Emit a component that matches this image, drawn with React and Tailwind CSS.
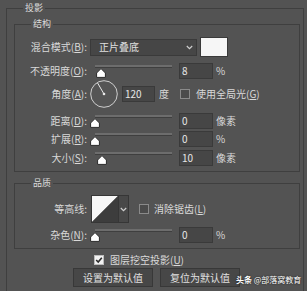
import React from "react";

const K = ({ c }) => <span className="underline underline-offset-[1px] decoration-[1px]">{c}</span>;

function Label({ children }) {
  return <div className="w-[72px] shrink-0 text-right whitespace-nowrap">{children}</div>;
}

function Chevron() {
  return (
    <svg width="7" height="5" viewBox="0 0 7 5" className="shrink-0">
      <polyline points="0.8,1 3.5,3.6 6.2,1" fill="none" stroke="#cfcfcf" strokeWidth="1.2" />
    </svg>
  );
}

function Slider({ thumb }) {
  return (
    <div className="relative w-[87px] h-[16px] shrink-0">
      <div className="absolute left-[5px] right-[5px] top-[2px] h-[3px] bg-[#6d6d6d] border-b border-[#3f3f3f]" />
      <svg className={"absolute top-[5px] " + thumb} width="10" height="10" viewBox="0 0 10 10">
        <path d="M5 0.6 L9.4 5 L9.4 9.4 L0.6 9.4 L0.6 5 Z" fill="#ffffff" stroke="#2a2a2a" strokeWidth="1" />
      </svg>
    </div>
  );
}

function Input({ v, w = "w-[34px]" }) {
  return (
    <div className={"h-[16px] shrink-0 bg-[#464646] border border-[#3a3a3a] pl-[2px] flex items-center leading-none text-[#e6e6e6] " + w}>
      {v}
    </div>
  );
}

function Check({ checked }) {
  return checked ? (
    <div className="w-[10px] h-[10px] shrink-0 bg-[#f2f2f2] border border-[#bdbdbd] flex items-center justify-center">
      <svg width="8" height="8" viewBox="0 0 8 8">
        <polyline points="1.2,4 3.2,6 6.8,1.8" fill="none" stroke="#2b2b2b" strokeWidth="1.6" />
      </svg>
    </div>
  ) : (
    <div className="w-[10px] h-[10px] shrink-0 bg-[#4b4b4b] border border-[#8a8a8a]" />
  );
}

function Legend({ children, className = "" }) {
  return <legend className={"px-[2px] text-[9px] leading-[14px] text-[#dcdcdc] " + className}>{children}</legend>;
}

export default function App() {
  return (
    <div className="relative w-[307px] h-[291px] overflow-hidden bg-[#535353] pt-[1px] text-[10px] leading-[14px] text-[#d9d9d9] font-['Noto_Sans_CJK_SC','Noto_Sans',sans-serif]">
      <fieldset className="ml-[6px] w-[298px] h-[310px] border border-[#3f3f3f] pl-[7px]">
        <Legend className="ml-[9px]">投影</Legend>

        <fieldset className="mt-[2px] w-[286px] border border-[#3f3f3f] pb-[5px]">
          <Legend className="ml-[16px]">结构</Legend>

          <div className="mt-[6px] h-[20px] flex items-center">
            <Label>混合模式(<K c="B" />):</Label>
            <div className="ml-[3px] w-[107px] h-[17px] bg-[#464646] border border-[#3a3a3a] flex items-center pl-[8px] pr-[3px]">
              <span className="flex-1 text-[#e0e0e0]">正片叠底</span>
              <Chevron />
            </div>
            <div className="ml-[3px] w-[28px] h-[20px] bg-[#f6f6f6] border border-[#3a3a3a]" />
          </div>

          <div className="mt-[6px] h-[16px] flex items-center">
            <Label>不透明度(<K c="O" />):</Label>
            <div className="ml-[3px] flex items-center">
              <Slider thumb="left-[6px]" />
              <div className="ml-[2px]"><Input v="8" /></div>
              <span className="ml-[3px]">%</span>
            </div>
          </div>

          <div className="mt-[1px] h-[28px] flex items-center">
            <Label>角度(<K c="A" />):</Label>
            <svg className="ml-[3px] shrink-0" width="28" height="28" viewBox="0 0 28 28">
              <circle cx="14" cy="14" r="13.3" fill="#555555" stroke="#cfcfcf" strokeWidth="1" />
              <line x1="14" y1="14" x2="7.6" y2="3" stroke="#e8e8e8" strokeWidth="1" />
              <circle cx="14" cy="14" r="1.3" fill="#e8e8e8" />
            </svg>
            <div className="ml-[4px]"><Input v="120" w="w-[33px]" /></div>
            <span className="ml-[4px]">度</span>
            <div className="ml-[11px]"><Check /></div>
            <span className="ml-[6px] whitespace-nowrap">使用全局光(<K c="G" />)</span>
          </div>

          <div className="mt-[5px] h-[16px] flex items-center">
            <Label>距离(<K c="D" />):</Label>
            <div className="ml-[3px] flex items-center">
              <Slider thumb="left-[0px]" />
              <div className="ml-[2px]"><Input v="0" /></div>
              <span className="ml-[3px]">像素</span>
            </div>
          </div>

          <div className="mt-[2px] h-[16px] flex items-center">
            <Label>扩展(<K c="R" />):</Label>
            <div className="ml-[3px] flex items-center">
              <Slider thumb="left-[0px]" />
              <div className="ml-[2px]"><Input v="0" /></div>
              <span className="ml-[3px]">%</span>
            </div>
          </div>

          <div className="mt-[3px] h-[16px] flex items-center">
            <Label>大小(<K c="S" />):</Label>
            <div className="ml-[3px] flex items-center">
              <Slider thumb="left-[7px]" />
              <div className="ml-[2px]"><Input v="10" /></div>
              <span className="ml-[3px]">像素</span>
            </div>
          </div>
        </fieldset>

        <fieldset className="mt-[4px] w-[286px] border border-[#3f3f3f] pb-[5px]">
          <Legend className="ml-[16px]">品质</Legend>

          <div className="mt-[5px] h-[28px] flex items-center">
            <Label>等高线:</Label>
            <div className="ml-[4px] h-[28px] flex border border-[#363636]">
              <svg width="26" height="26" viewBox="0 0 26 26" className="shrink-0">
                <polygon points="0,0 26,0 0,26" fill="#f7f7f7" />
                <polygon points="26,0 26,26 0,26" fill="#3d3d3d" />
              </svg>
              <div className="w-[10px] bg-[#484848] border-l border-[#363636] flex items-center justify-center">
                <Chevron />
              </div>
            </div>
            <div className="ml-[10px]"><Check /></div>
            <span className="ml-[5px] whitespace-nowrap">消除锯齿(<K c="L" />)</span>
          </div>

          <div className="mt-[4px] h-[16px] flex items-center">
            <Label>杂色(<K c="N" />):</Label>
            <div className="ml-[3px] flex items-center">
              <Slider thumb="left-[0px]" />
              <div className="ml-[2px]"><Input v="0" /></div>
              <span className="ml-[3px]">%</span>
            </div>
          </div>
        </fieldset>

        <div className="mt-[5px] h-[11px] flex items-center pl-[80px]">
          <Check checked />
          <span className="ml-[6px] whitespace-nowrap">图层挖空投影(<K c="U" />)</span>
        </div>

        <div className="mt-[3px] flex gap-[7px] pl-[59px]">
          <div className="w-[80px] h-[19px] bg-[#474747] border border-[#383838] flex items-center justify-center text-[#e0e0e0]">设置为默认值</div>
          <div className="w-[80px] h-[19px] bg-[#474747] border border-[#383838] flex items-center justify-center text-[#e0e0e0]">复位为默认值</div>
        </div>
      </fieldset>

      <div className="absolute left-[236px] top-[274px] text-[8px] leading-[12px] text-white whitespace-nowrap [text-shadow:0_0_2px_rgba(0,0,0,0.8)]">
        <span className="font-bold">头条</span> @部落窝教育
      </div>
    </div>
  );
}
